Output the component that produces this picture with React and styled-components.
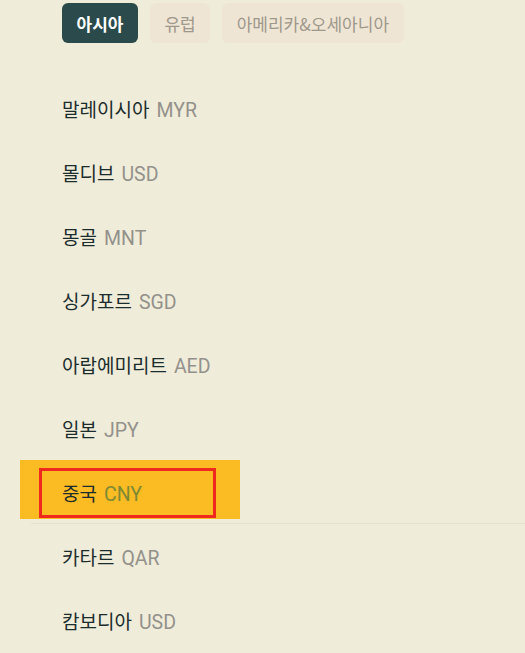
import React from "react";
import styled, { createGlobalStyle } from "styled-components";

const GlobalStyle = createGlobalStyle`
    body {
        margin: 0;
        background-color: #f0ecda;
        font-family: Roboto, "Noto Sans CJK KR", sans-serif;
    }
`;

const Page = styled.div`
    width: 525px;
    height: 653px;
    overflow: hidden;
`;

const Tabs = styled.div`
    display: flex;
    gap: 12px;
    padding: 3px 0 0 62px;
`;

const Tab = styled.button`
    height: 40px;
    padding: 0 14.5px;
    border: none;
    border-radius: 6px;
    font-family: "Noto Sans CJK KR", sans-serif;
    font-size: 17px;
    font-weight: ${({ active }) => (active ? 700 : 400)};
    color: ${({ active }) => (active ? "#ffffff" : "#9d978c")};
    background-color: ${({ active }) => (active ? "#2a4a4b" : "#efe5d4")};
    cursor: pointer;
`;

const List = styled.ul`
    list-style: none;
    margin: 33px 0 0;
    padding: 0;
`;

const Row = styled.li`
    position: relative;
    height: 64px;
    display: flex;
    align-items: center;
    padding-left: 62px;

    ${({ selected }) =>
        selected &&
        `&::after {
        content: "";
        position: absolute;
        left: 31px;
        right: 0;
        bottom: 0;
        height: 1px;
        background-color: #e6e1cc;
    }`}
`;

const Link = styled.a`
    position: relative;
    display: flex;
    align-items: center;
    font-size: 19px;
    color: #1b2c2d;
    text-decoration: none;

    ${({ selected }) =>
        selected &&
        `align-self: flex-start;
    height: 59px;
    width: 220px;
    box-sizing: border-box;
    margin-left: -42px;
    padding: 5px 0 0 42px;
    background-color: #fbbb22;`}
`;

const Label = styled.span`
    white-space: nowrap;
`;

const Name = styled.span`
    font-family: "Noto Sans CJK KR", sans-serif;
`;

const Code = styled.span`
    margin-left: 7px;
    font-family: Roboto, sans-serif;
    font-size: 19.5px;
    color: ${({ selected }) => (selected ? "#7d8a34" : "#93918b")};
`;

const FocusMark = styled.span`
    position: absolute;
    left: 19px;
    top: 8px;
    width: 177px;
    height: 50px;
    box-sizing: border-box;
    border: 3px solid #f0291e;
`;

const regions = ["아시아", "유럽", "아메리카&오세아니아"];

const countries = [
    { name: "말레이시아", code: "MYR" },
    { name: "몰디브", code: "USD" },
    { name: "몽골", code: "MNT" },
    { name: "싱가포르", code: "SGD" },
    { name: "아랍에미리트", code: "AED" },
    { name: "일본", code: "JPY" },
    { name: "중국", code: "CNY", selected: true },
    { name: "카타르", code: "QAR" },
    { name: "캄보디아", code: "USD" }
];

export default function App() {
    return (
        <Page>
            <GlobalStyle />
            <Tabs>
                {regions.map((r, i) => (
                    <Tab key={r} active={i === 0}>
                        {r}
                    </Tab>
                ))}
            </Tabs>
            <List>
                {countries.map(c => (
                    <Row key={c.name} selected={c.selected}>
                        <Link href="#" selected={c.selected}>
                            <Label>
                                <Name>{c.name}</Name>
                                <Code selected={c.selected}>{c.code}</Code>
                            </Label>
                            {c.selected && <FocusMark />}
                        </Link>
                    </Row>
                ))}
            </List>
        </Page>
    );
}
